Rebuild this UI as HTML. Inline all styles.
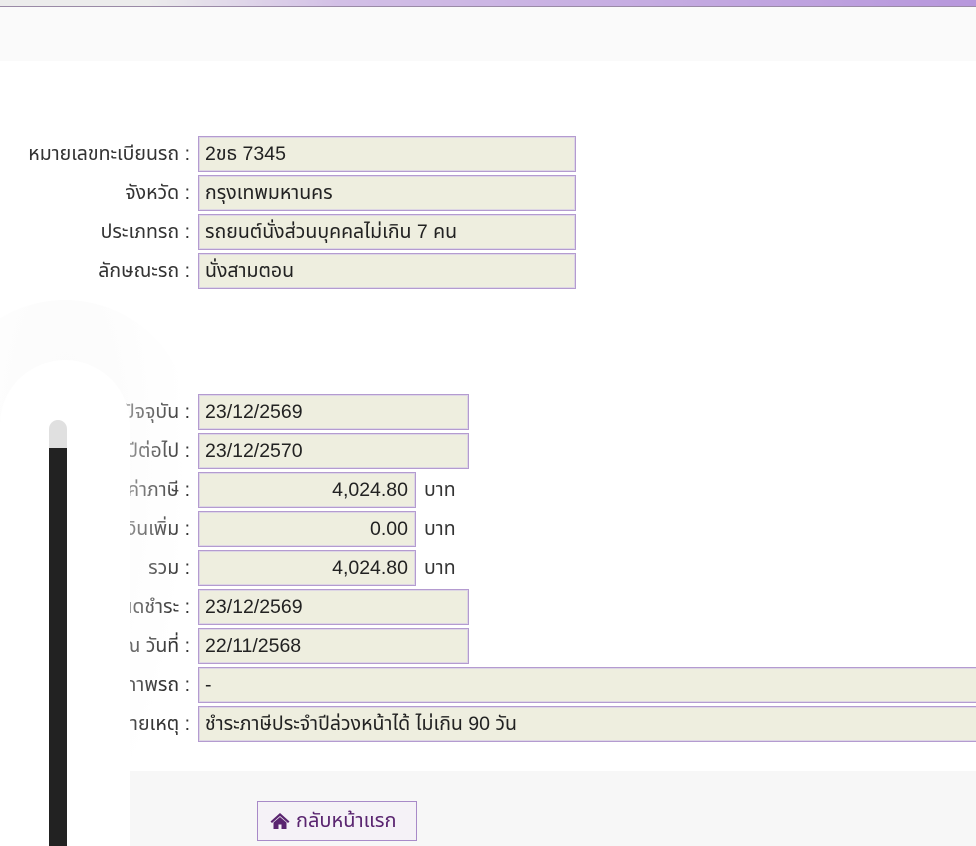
<!DOCTYPE html>
<html><head><meta charset="utf-8"><style>
*{margin:0;padding:0;box-sizing:border-box}
body{width:976px;height:846px;overflow:hidden;background:#fff;position:relative;font-family:"Liberation Sans","Noto Sans Thai","Garuda","Loma","DejaVu Sans",sans-serif;font-size:19.5px;color:#222}
.top{position:absolute;left:0;top:0;width:976px;height:7px;background:linear-gradient(90deg,#ececec 0%,#ececec 15%,#d2bfe6 35%,#b797dc 100%);border-bottom:1px solid #9a8aa6}
.hdr{position:absolute;left:0;top:7px;width:976px;height:54px;background:#fafafa}
.foot{position:absolute;left:130px;top:771px;width:846px;height:75px;background:#f7f7f7}
.lab{position:absolute;right:786px;height:36px;line-height:36px;white-space:nowrap;color:#333}
.in{position:absolute;left:198px;height:36px;line-height:34px;background:#eeeedf;border:1px solid #b49bd0;box-shadow:inset 0 0 0 1px #ddd6e4;padding:0 6px;white-space:nowrap;color:#222}
.r{text-align:right;padding-right:7px}
.baht{position:absolute;left:424px;height:36px;line-height:36px;color:#333}
.panel{position:absolute;left:0;top:360px;width:130px;height:486px;background:#fff;border-radius:65px 65px 0 0}
.halo{position:absolute;left:-60px;top:300px;width:250px;height:546px;border-radius:125px 125px 0 0;background:radial-gradient(ellipse at 50% 30%,#fafafa,rgba(255,255,255,0) 70%)}
.bar{position:absolute;left:49px;top:448px;width:18px;height:398px;background:#222}
.cap{position:absolute;left:49px;top:420px;width:18px;height:28px;background:#e0e0e0;border-radius:9px 9px 0 0}
.btn{position:absolute;left:257px;top:801px;width:160px;height:40px;border:1px solid #a88ac8;background:#f5f2f7;color:#5a2570;line-height:38px;padding-left:12px;font-size:20px;white-space:nowrap}
.btn svg{vertical-align:-3px;margin-right:6px}
</style></head><body>
<div class="top"></div>
<div class="hdr"></div>
<div class="foot"></div>

<div class="lab" style="top:136px">หมายเลขทะเบียนรถ :</div><div class="in" style="top:136px;width:378px">2ขธ 7345</div>
<div class="lab" style="top:175px">จังหวัด :</div><div class="in" style="top:175px;width:378px">กรุงเทพมหานคร</div>
<div class="lab" style="top:214px">ประเภทรถ :</div><div class="in" style="top:214px;width:378px">รถยนต์นั่งส่วนบุคคลไม่เกิน 7 คน</div>
<div class="lab" style="top:253px">ลักษณะรถ :</div><div class="in" style="top:253px;width:378px">นั่งสามตอน</div>

<div class="lab" style="top:394px">วันสิ้นอายุภาษีปีปัจจุบัน :</div><div class="in" style="top:394px;width:271px">23/12/2569</div>
<div class="lab" style="top:433px">วันสิ้นอายุภาษีปีต่อไป :</div><div class="in" style="top:433px;width:271px">23/12/2570</div>
<div class="lab" style="top:472px">ค่าภาษี :</div><div class="in r" style="top:472px;width:218px">4,024.80</div><div class="baht" style="top:472px">บาท</div>
<div class="lab" style="top:511px">เงินเพิ่ม :</div><div class="in r" style="top:511px;width:218px">0.00</div><div class="baht" style="top:511px">บาท</div>
<div class="lab" style="top:550px">รวม :</div><div class="in r" style="top:550px;width:218px">4,024.80</div><div class="baht" style="top:550px">บาท</div>
<div class="lab" style="top:589px">วันครบกำหนดชำระ :</div><div class="in" style="top:589px;width:271px">23/12/2569</div>
<div class="lab" style="top:628px">ข้อมูล ณ วันที่ :</div><div class="in" style="top:628px;width:271px">22/11/2568</div>
<div class="lab" style="top:667px">สภาพรถ :</div><div class="in" style="top:667px;width:790px">-</div>
<div class="lab" style="top:706px">หมายเหตุ :</div><div class="in" style="top:706px;width:790px">ชำระภาษีประจำปีล่วงหน้าได้ ไม่เกิน 90 วัน</div>

<div class="halo"></div>
<div class="panel"></div>
<div class="cap"></div>
<div class="bar"></div>

<div class="btn"><svg width="20" height="18" viewBox="0 0 20 18"><path d="M10 1L0.5 9.5L2 11L10 4L18 11L19.5 9.5Z" fill="#5a2570"/><path d="M3.5 10.5L10 5L16.5 10.5V17H11.5V12.5H8.5V17H3.5Z" fill="#5a2570"/></svg>กลับหน้าแรก</div>
</body></html>
